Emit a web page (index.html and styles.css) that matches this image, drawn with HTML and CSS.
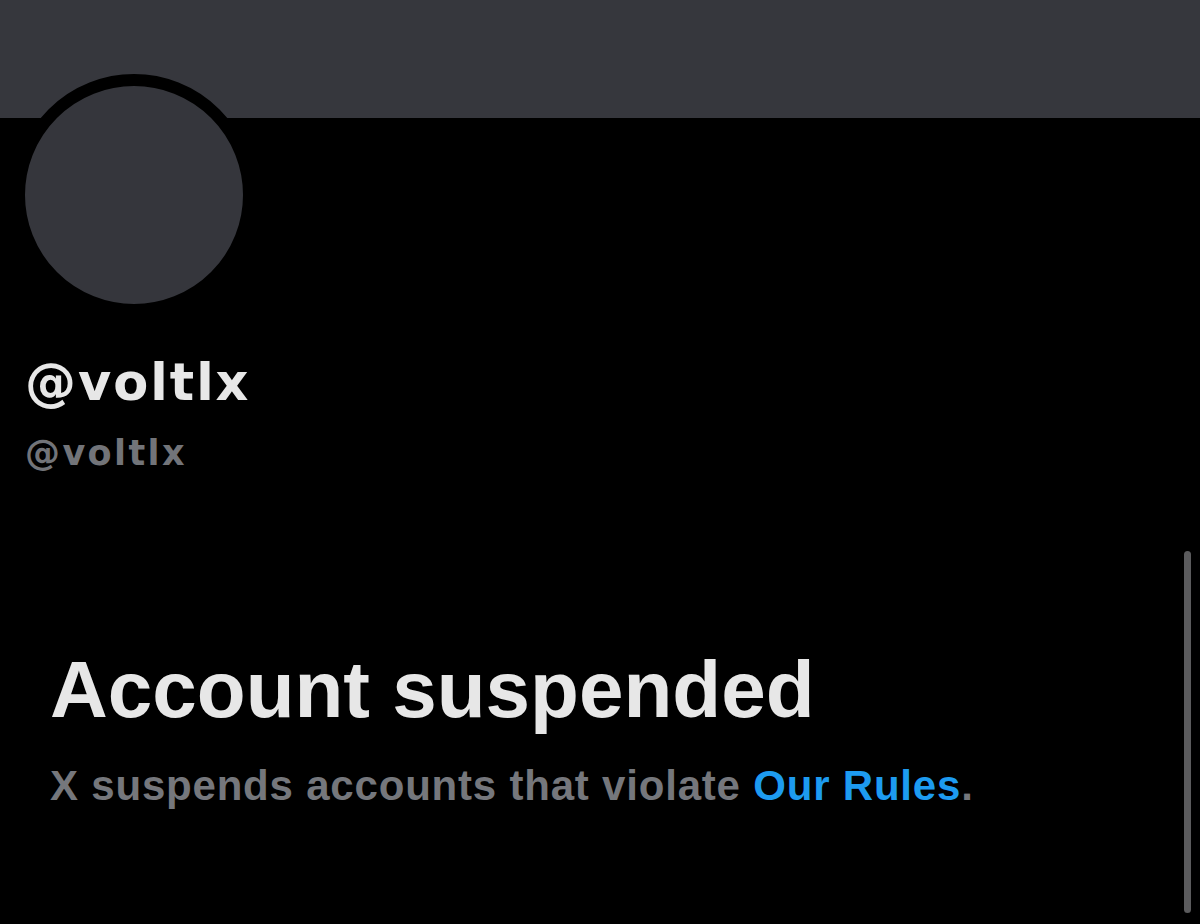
FILE: index.html
```html
<!DOCTYPE html>
<html lang="en">
<head>
<meta charset="utf-8">
<title>@voltlx</title>
<link rel="stylesheet" href="styles.css">
</head>
<body>
<div class="page">
  <div class="banner"></div>
  <div class="profile">
    <div class="avatar"></div>
    <div class="names">
      <div class="display-name">@voltlx</div>
      <div class="handle">@voltlx</div>
    </div>
  </div>
  <section class="notice">
    <h1 class="notice-title">Account suspended</h1>
    <p class="notice-text">X suspends accounts that violate <a class="rules-link" href="#">Our Rules</a>.</p>
  </section>
  <div class="scrollbar"></div>
</div>
</body>
</html>
```
FILE: styles.css
```css
html, body {
  margin: 0;
  padding: 0;
  background: #000;
}

.page {
  position: relative;
  width: 1200px;
  height: 924px;
  overflow: hidden;
  background: #000;
  font-family: "Liberation Sans", Arial, sans-serif;
  font-weight: 700;
}

.banner {
  height: 118px;
  background: #36373d;
}

.profile {
  padding-left: 13px;
}

.avatar {
  width: 218px;
  height: 218px;
  margin-top: -44px;
  border: 12px solid #000;
  border-radius: 50%;
  background: #35363c;
}

.names {
  padding-left: 12px;
  margin-top: 38px;
  font-family: "DejaVu Sans", "Liberation Sans", sans-serif;
}

.display-name {
  color: #e7e7e7;
  font-size: 51px;
  line-height: 58px;
  letter-spacing: 2px;
}

.handle {
  color: #727479;
  font-size: 35px;
  line-height: 40px;
  letter-spacing: 2.4px;
  margin-top: 21px;
}

.notice {
  padding-left: 50px;
  margin-top: 172px;
}

.notice-title {
  margin: 0;
  color: #e7e7e7;
  font-size: 80px;
  line-height: 90px;
  font-weight: 700;
}

.notice-text {
  margin: 27px 0 0;
  color: #75777c;
  font-size: 42px;
  line-height: 48px;
  letter-spacing: 0.8px;
}

.rules-link {
  color: #1d9bf0;
  text-decoration: none;
}

/* overlay scroll thumb on the right edge */
.scrollbar {
  position: absolute;
  left: 1184px;
  top: 551px;
  width: 7px;
  height: 362px;
  border-radius: 4px;
  background: #5b5b5d;
}
```
